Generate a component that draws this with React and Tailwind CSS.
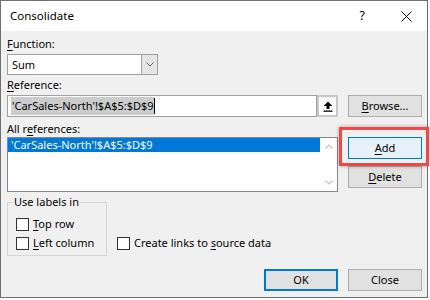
export default function App() {
  const font = { fontFamily: '"Noto Sans", "Open Sans", sans-serif' };
  const btn =
    "w-[74px] h-[22px] bg-[#e1e1e1] border border-[#adadad] flex items-center justify-center text-[11px] leading-[16px] text-black";
  return (
    <div className="w-[430px] h-[300px] bg-white relative overflow-hidden text-black" style={font}>
      <div className="w-[428px] h-[298px] border border-[#707070] flex flex-col bg-[#f0f0f0]">
        {/* Title bar */}
        <div className="h-[30px] bg-white flex items-center pl-[9px] shrink-0">
          <span className="text-[11.5px] leading-[16px]">Consolidate</span>
          <span className="ml-auto text-[12.5px] leading-[16px] mr-[36px]">?</span>
          <svg width="11" height="11" viewBox="0 0 11 11" className="mr-[15px]">
            <path d="M0.5 0.5 L10.5 10.5 M10.5 0.5 L0.5 10.5" stroke="#111" strokeWidth="1" fill="none" />
          </svg>
        </div>
        {/* Body */}
        <div className="flex-1 flex flex-col pl-[6px] pr-[5px] text-[11px] leading-[16px]">
          <div className="mt-[5px] h-[16px]">
            <u className="underline-offset-2">F</u>unction:
          </div>
          <div className="mt-[2px] w-[151px] h-[21px] border border-[#a0a0a0] bg-white flex">
            <div className="flex-1 pl-[4px] flex items-center">Sum</div>
            <div className="w-[16px] h-full bg-[#e5e5e5] border-l border-[#a0a0a0] flex items-center justify-center">
              <svg width="8" height="5" viewBox="0 0 8 5">
                <path d="M0.5 0.5 L4 4 L7.5 0.5" stroke="#606060" strokeWidth="1" fill="none" />
              </svg>
            </div>
          </div>
          <div className="mt-[2px] h-[16px]">
            <u className="underline-offset-2">R</u>eference:
          </div>
          <div className="mt-[2px] h-[22px] flex gap-[10px]">
            <div className="w-[331px] h-full flex">
              <div className="flex-1 border border-[#a0a0a0] bg-white flex items-center pl-[3px]">
                <span className="bg-[#cccccc] leading-[18px] pl-[1px]">'CarSales-North'!$A$5:$D$9</span>
                <span className="w-[1px] h-[16px] bg-black"></span>
              </div>
              <div className="w-[21px] h-full border-2 border-[#c8c8c8] bg-white flex items-center justify-center">
                <svg width="10" height="11" viewBox="0 0 10 11">
                  <path d="M5 0.5 L9.5 5 L6.5 5 L6.5 8 L3.5 8 L3.5 5 L0.5 5 Z" fill="#000" />
                  <rect x="0.5" y="9.5" width="9" height="1.3" fill="#000" />
                </svg>
              </div>
            </div>
            <div className={btn}>
              <span>
                <u className="underline-offset-2">B</u>rowse...
              </span>
            </div>
          </div>
          <div className="mt-[4px] h-[16px]">
            All r<u className="underline-offset-2">e</u>ferences:
          </div>
          <div className="h-[55px] flex gap-[10px]">
            <div className="w-[331px] h-full border border-[#828790] bg-white flex">
              <div className="flex-1">
                <div className="h-[14px] bg-[#0078d7] text-white leading-[14px] pl-[3px]">
                  'CarSales-North'!$A$5:$D$9
                </div>
              </div>
              <div className="w-[17px] h-full flex flex-col items-center justify-between py-[6px]">
                <svg width="8" height="5" viewBox="0 0 8 5">
                  <path d="M0.5 4.5 L4 1 L7.5 4.5" stroke="#c2c2c2" strokeWidth="1.2" fill="none" />
                </svg>
                <svg width="8" height="5" viewBox="0 0 8 5">
                  <path d="M0.5 0.5 L4 4 L7.5 0.5" stroke="#c2c2c2" strokeWidth="1.2" fill="none" />
                </svg>
              </div>
            </div>
            <div className="flex flex-col">
              <div className="w-[74px] h-[22px] bg-[#e5f1fb] border border-[#0078d7] flex items-center justify-center">
                <span>
                  <u className="underline-offset-2">A</u>dd
                </span>
              </div>
              <div className={btn + " mt-[7px]"}>
                <span>
                  <u className="underline-offset-2">D</u>elete
                </span>
              </div>
            </div>
          </div>
          <div className="mt-[2px] flex gap-[10px] items-end">
            <fieldset className="w-[100px] h-[62px] border border-[#d5d5d5] p-0 m-0 min-w-0">
              <legend className="ml-[5px] px-[1px] leading-[16px]">Use labels in</legend>
              <div className="pl-[8px] pt-[6px] flex flex-col gap-[3px]">
                <label className="flex items-center h-[16px] gap-[4px]">
                  <span className="w-[13px] h-[13px] border border-[#333] bg-white"></span>
                  <span>
                    <u className="underline-offset-2">T</u>op row
                  </span>
                </label>
                <label className="flex items-center h-[16px] gap-[4px]">
                  <span className="w-[13px] h-[13px] border border-[#333] bg-white"></span>
                  <span>
                    <u className="underline-offset-2">L</u>eft column
                  </span>
                </label>
              </div>
            </fieldset>
            <label className="flex items-center h-[16px] gap-[4px] mb-[5px]">
              <span className="w-[13px] h-[13px] border border-[#333] bg-white"></span>
              <span>
                Create links to <u className="underline-offset-2">s</u>ource data
              </span>
            </label>
          </div>
          <div className="mt-[13px] flex justify-end gap-[10px]">
            <div className="w-[74px] h-[22px] bg-[#e1e1e1] border-2 border-[#0078d7] flex items-center justify-center">
              OK
            </div>
            <div className={btn}>Close</div>
          </div>
        </div>
      </div>
      {/* Highlight overlay */}
      <div className="absolute left-[339px] top-[127px] w-[90px] h-[39px] border-[3px] border-[#f04848] shadow-[0_0_4px_rgba(0,0,0,0.35)]"></div>
    </div>
  );
}
